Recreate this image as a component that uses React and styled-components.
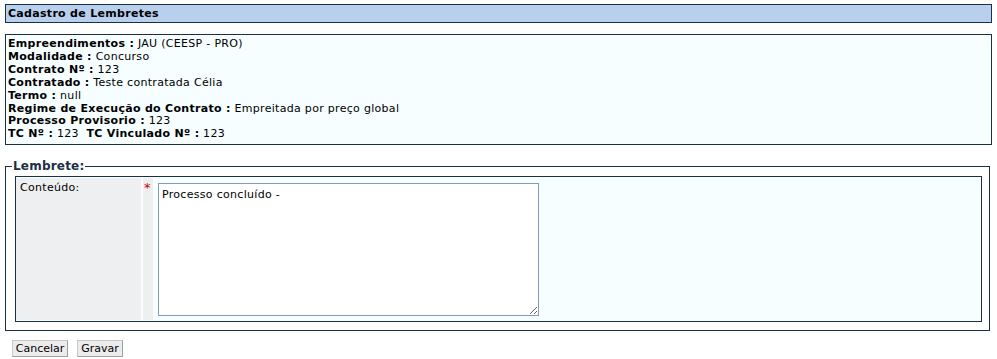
import React from "react";
import styled, { createGlobalStyle } from "styled-components";

const GlobalStyle = createGlobalStyle`
  body {
    margin: 0;
    background: #ffffff;
    font-family: "DejaVu Sans", Verdana, sans-serif;
    font-size: 11px;
    color: #000;
  }
`;

const Page = styled.div`
  padding: 4px 5px 0 5px;
  width: 997px;
  box-sizing: border-box;
`;

const TitleBar = styled.div`
  height: 19px;
  box-sizing: border-box;
  border: 1px solid #1b3047;
  background: #b8d0ed;
  font-weight: bold;
  font-size: 11px;
  letter-spacing: 0.3px;
  line-height: 17px;
  padding-left: 2px;
`;

const InfoBox = styled.div`
  margin-top: 11px;
  border: 1px solid #1b3047;
  background: #f6feff;
  padding: 3px 2px 3px 2px;
  line-height: 12.9px;
  letter-spacing: 0.3px;
  height: 111px;
  box-sizing: border-box;
`;

const InfoLine = styled.div`
  white-space: nowrap;
`;

const Key = styled.b`
  font-weight: bold;
`;

const Fieldset = styled.fieldset`
  margin: 14px 2px 0 0;
  padding: 3px 7px 8px 9px;
  border: 1px solid #1b3047;
  border-radius: 0;
`;

const Legend = styled.legend`
  padding: 0 1px;
  margin-left: -3px;
  font-weight: bold;
  font-size: 12px;
  letter-spacing: 0.2px;
  color: #1b3047;
`;

const FormTable = styled.div`
  display: flex;
  border: 1px solid #1b3047;
  background: #f6feff;
  height: 146px;
  box-sizing: border-box;
  padding: 1px 0;
`;

const LabelCell = styled.div`
  width: 125px;
  background: #eeeff1;
  padding: 3px 0 0 4px;
  box-sizing: border-box;
  margin-right: 2px;
  letter-spacing: 0.3px;
`;

const MarkCell = styled.div`
  width: 10px;
  background: #eeeff1;
  color: #cc0000;
  font-size: 13px;
  padding: 3px 0 0 1px;
  box-sizing: border-box;
  line-height: 14px;
`;

const FieldCell = styled.div`
  flex: 1;
  padding: 5px 0 0 5px;
`;

const TextArea = styled.textarea`
  width: 381px;
  height: 133px;
  box-sizing: border-box;
  border: 1px solid #7f9db9;
  font-family: "DejaVu Sans", Verdana, sans-serif;
  font-size: 11px;
  letter-spacing: 0.3px;
  padding: 4px 3px;
  margin: 0;
  resize: both;
  display: block;
`;

const Actions = styled.div`
  display: flex;
  gap: 9px;
  padding: 9px 0 0 7px;
`;

const Button = styled.button`
  height: 17px;
  padding: 0;
  width: ${(p) => p.w}px;
  background: #ececec;
  border: 1px solid #c8c8c8;
  border-right-color: #a0a0a0;
  border-bottom-color: #a0a0a0;
  font-family: "DejaVu Sans", Tahoma, sans-serif;
  font-size: 11px;
  line-height: 15px;
  color: #000;
`;

const info = [
  ["Empreendimentos", "JAU (CEESP - PRO)"],
  ["Modalidade", "Concurso"],
  ["Contrato Nº", "123"],
  ["Contratado", "Teste contratada Célia"],
  ["Termo", "null"],
  ["Regime de Execução do Contrato", "Empreitada por preço global"],
  ["Processo Provisorio", "123"],
];

export default function App() {
  return (
    <>
      <GlobalStyle />
      <Page>
        <TitleBar>Cadastro de Lembretes</TitleBar>
        <InfoBox>
          {info.map(([k, v]) => (
            <InfoLine key={k}>
              <Key>{k} :</Key> {v}
            </InfoLine>
          ))}
          <InfoLine>
            <Key>TC Nº :</Key> 123&nbsp; <Key>TC Vinculado Nº :</Key> 123
          </InfoLine>
        </InfoBox>
        <Fieldset>
          <Legend>Lembrete:</Legend>
          <FormTable>
            <LabelCell>Conteúdo:</LabelCell>
            <MarkCell>*</MarkCell>
            <FieldCell>
              <TextArea defaultValue="Processo concluído -" />
            </FieldCell>
          </FormTable>
        </Fieldset>
        <Actions>
          <Button w={56}>Cancelar</Button>
          <Button w={46}>Gravar</Button>
        </Actions>
      </Page>
    </>
  );
}
